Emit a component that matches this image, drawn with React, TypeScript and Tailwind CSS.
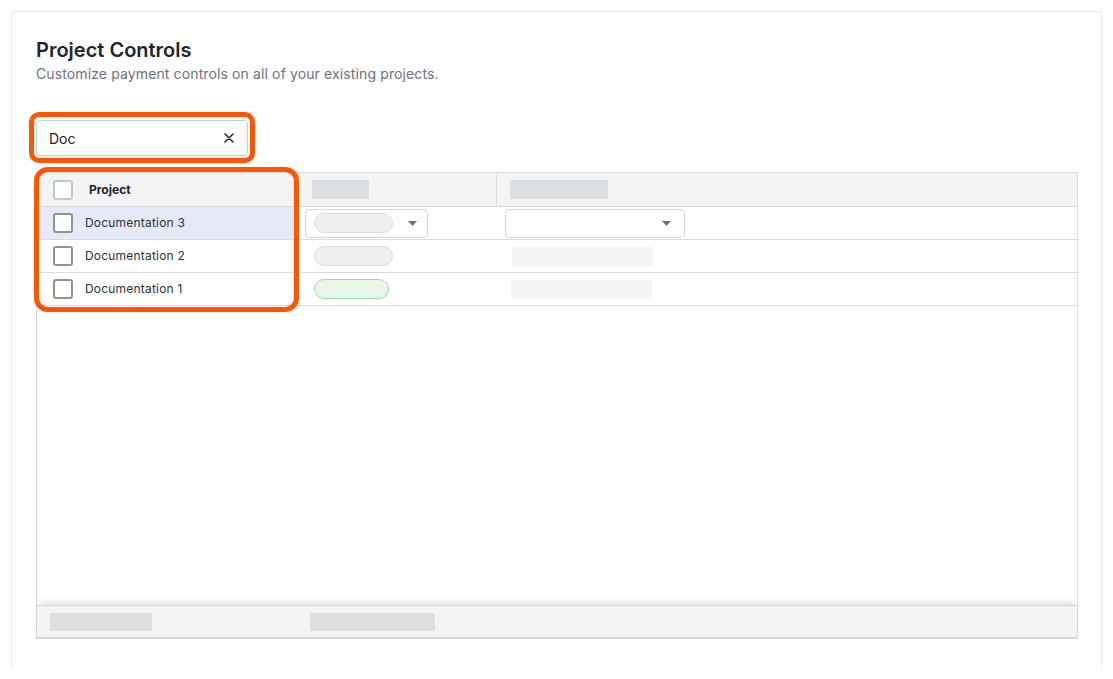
const font = { fontFamily: "Inter, 'Noto Sans', sans-serif" };

function Caret() {
  return (
    <svg width="9" height="5" viewBox="0 0 9 5" className="shrink-0">
      <path d="M0 0h9L4.5 5z" fill="#6b7280" />
    </svg>
  );
}

function Checkbox({ light }: { light?: boolean }) {
  return (
    <div
      className={`h-5 w-5 shrink-0 rounded-[3px] border-2 bg-white ${
        light ? "border-[#c3c7cc]" : "border-[#8f9296]"
      }`}
    />
  );
}

const rows = [
  { name: "Documentation 3", active: true, status: "select" },
  { name: "Documentation 2", active: false, status: "gray" },
  { name: "Documentation 1", active: false, status: "green" },
];

export default function App() {
  return (
    <div className="relative min-h-screen bg-white px-[11px] pt-[11px] text-[#1f2328]" style={font}>
      <div className="h-[657px] w-[1091px] border border-b-0 border-[#e9eaeb] px-6 pt-6">
        <h1 className="text-[20px] leading-7 font-semibold text-[#22262a]">Project Controls</h1>
        <p className="text-[14px] leading-5 tracking-[0.12px] text-[#6b7280]">
          Customize payment controls on all of your existing projects.
        </p>

        <div className="mt-[36px] flex h-9 w-[212px] items-center justify-between rounded border border-[#c9ccd1] pr-[13px] pl-[12px]">
          <span className="text-[14px] text-[#1f2328]">Doc</span>
          <svg width="10" height="10" viewBox="0 0 10 10">
            <path d="M1 1l8 8M9 1l-8 8" stroke="#222" strokeWidth="1.5" strokeLinecap="round" />
          </svg>
        </div>

        <div className="mt-4 flex h-[467px] w-[1042px] flex-col border border-b-0 border-[#d9dbde]">
          {/* header */}
          <div className="flex h-[34px] shrink-0 border-b border-[#d9dbde] bg-[#f3f4f6]">
            <div className="flex w-[261px] items-center gap-4 border-r border-[#d9dbde] pl-4">
              <Checkbox light />
              <span className="text-[12px] font-bold text-[#1f2328]">Project</span>
            </div>
            <div className="flex w-[199px] items-center border-r border-[#d9dbde] pl-[14px]">
              <div className="h-[19px] w-[57px] bg-[#dcdfe2]" />
            </div>
            <div className="flex flex-1 items-center pl-[13px]">
              <div className="h-[19px] w-[98px] bg-[#dcdfe2]" />
            </div>
          </div>

          {/* rows */}
          {rows.map((r) => (
            <div key={r.name} className="flex h-[33px] shrink-0 border-b border-[#d9dbde]">
              <div
                className={`flex w-[261px] items-center gap-3 pl-4 ${r.active ? "bg-[#e4eaf8]" : "bg-white"}`}
              >
                <Checkbox />
                <span className="text-[12px] tracking-[0.2px] text-[#2d3237]">{r.name}</span>
              </div>
              <div className="flex w-[199px] items-center">
                {r.status === "select" ? (
                  <div className="ml-[7px] flex h-[29px] w-[123px] items-center justify-between rounded border border-[#d3d6da] pr-[10px] pl-[8px]">
                    <div className="h-5 w-[79px] rounded-full border border-[#dcdfe3] bg-[#eef0f2]" />
                    <Caret />
                  </div>
                ) : r.status === "gray" ? (
                  <div className="ml-[16px] h-5 w-[79px] rounded-full border border-[#dcdfe3] bg-[#eef0f2]" />
                ) : (
                  <div className="ml-[16px] h-5 w-[75px] rounded-full border border-[#9fdca3] bg-[#e7f7e8]" />
                )}
              </div>
              <div className="flex flex-1 items-center">
                {r.status === "select" ? (
                  <div className="ml-[8px] flex h-[29px] w-[180px] items-center justify-end rounded border border-[#d3d6da] pr-[13px]">
                    <Caret />
                  </div>
                ) : (
                  <div className={`h-[19px] w-[141px] bg-[#f3f4f6] ${r.status === "gray" ? "ml-[15px]" : "ml-[14px]"}`} />
                )}
              </div>
            </div>
          ))}

          <div className="flex-1" />

          {/* footer */}
          <div className="flex h-[34px] shrink-0 items-center border-t border-b-2 border-[#d4d6da] bg-[#f3f4f6] shadow-[0_-5px_9px_-3px_rgba(0,0,0,0.14)]">
            <div className="ml-[13px] h-[18px] w-[102px] bg-[#dcdfe2]" />
            <div className="ml-[158px] h-[18px] w-[125px] bg-[#dcdfe2]" />
          </div>
        </div>
      </div>

      {/* annotation outlines */}
      <div className="pointer-events-none absolute top-[112px] left-[29px] h-[51px] w-[226px] rounded-[10px] border-[5px] border-[#ff5500]" />
      <div className="pointer-events-none absolute top-[167px] left-[34px] h-[145px] w-[265px] rounded-[14px] border-[5px] border-[#ff5500]" />
    </div>
  );
}
